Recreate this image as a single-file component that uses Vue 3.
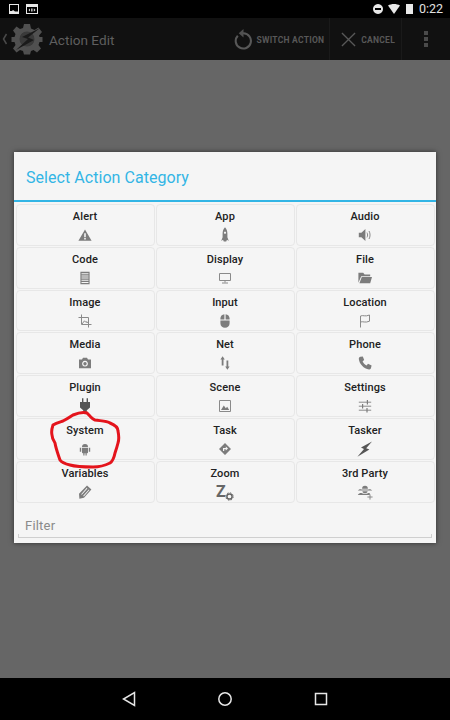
<script setup>
const cats = [
  { name: 'Alert', fill: 'M8 2.600 14.600 13.800H1.400ZM7.200 6.200v4h1.600v-4ZM7.200 11v1.500h1.600V11Z' },
  { name: 'App', fill: 'M8 .2C9.800 2 10.400 4.400 10.400 6.800V10.200L11.800 14 10 12.800 9.200 14.400H6.800L6 12.800 4.200 14 5.600 10.200V6.800C5.600 4.400 6.200 2 8 .2ZM8 4.600a1.100 1.100 0 1 0 .01 0Z' },
  { name: 'Audio', fill: 'M1.800 5.800H4.400L8.400 2V14L4.400 10.200H1.800Z', line: 'M10 5.600C10.800 7 10.800 9 10 10.400M12 4C13.400 6.200 13.400 9.800 12 12' },
  { name: 'Code', fill: 'M3.400 1.800H12.600V14.200H3.400ZM4.500 3.200V4.200H11.500V3.200ZM4.500 5.400V6.400H11.500V5.400ZM4.500 7.600V8.600H11.500V7.600ZM4.500 9.800V10.800H11.500V9.800ZM4.500 12V13H11.500V12Z' },
  { name: 'Display', line: 'M2.500 3.500H13.500V10.500H2.500ZM8 10.500V12.500M5 13H11' },
  { name: 'File', fill: 'M1.400 2.800H6.200L7.600 4.400H13.200V6.200H4.200L1.400 12.800ZM4.800 7H15L13.200 13.200H2.400Z' },
  { name: 'Image', line: 'M4.500 1.500V11.500H14.500M1.500 4.500H11.500V14.500M5 11L7.500 7.800 9 9.500 10 8.600 11 10' },
  { name: 'Input', fill: 'M7.400 1.200V6.400H3.400V5.600C3.400 3.200 5 1.400 7.400 1.200ZM8.600 1.200C11 1.400 12.600 3.200 12.600 5.600V6.400H8.600ZM3.400 7.400H12.600V10.200C12.600 13 10.600 14.800 8 14.800S3.400 13 3.400 10.200Z' },
  { name: 'Location', line: 'M3.500 14.500V3C6 1.800 8 4 12.500 2V8.200C8 10.200 6 8 3.500 9' },
  { name: 'Media', fill: 'M2 4.400H5L6 2.800H10L11 4.400H14V13.200H2ZM8 5.800A2.900 2.900 0 1 0 8.010 5.800ZM8 7A1.700 1.700 0 1 1 7.990 7Z' },
  { name: 'Net', fill: 'M5.600 1.200 7.800 4.600H6.500V10.400H4.700V4.600H3.400ZM10.400 14.800 8.200 11.400H9.500V5.600H11.300V11.400H12.600Z' },
  { name: 'Phone', fill: 'M3.400 1.800 5.800 1.400 7.200 5 5.600 6.200C6.200 8 7.800 9.600 9.600 10.400L11 8.800 14.600 10.400 14 13C13.800 14 13 14.600 12 14.400 6.800 13.800 2.400 9 1.800 4 1.800 2.800 2.400 2 3.400 1.800Z' },
  { name: 'Plugin', dark: true, fill: 'M5 .2H6.400V4H9.600V.2H11V4H13V9.400L9.800 12.200V15.800H6.200V12.200L3 9.400V4H5Z' },
  { name: 'Scene', line: 'M2.500 2.500H13.500V13.500H2.500Z', fill: 'M4 12 6.800 7.600 8.800 10.200 10.200 8.800 12.200 12Z' },
  { name: 'Settings', line: 'M1.800 4.200H14.200M1.800 8.200H14.200M1.800 12.200H14.200', fill: 'M9.800 2H11V6.400H9.800ZM5 6H6.200V10.400H5ZM9.400 10H10.600V14.400H9.400Z' },
  { name: 'System', fill: 'M5 6A3 3 0 0 1 11 6ZM5 6.800H11V11.400C11 11.900 10.700 12.200 10.200 12.200H9.700V14.400H8.500V12.200H7.500V14.400H6.300V12.200H5.800C5.300 12.200 5 11.900 5 11.400ZM2.800 6.800H4.200V10.800H2.800ZM11.800 6.800H13.200V10.800H11.800Z' },
  { name: 'Task', fill: 'M8 2 14 8 8 14 2 8ZM6 7V10H7.200V8.200H8.800V9.600L11 7.600 8.800 5.600V7Z' },
  { name: 'Tasker', dark: true, fill: 'M15 .4 4 6.400 7 8 .4 15.800 12.400 8.600 9.200 7.200Z' },
  { name: 'Variables', fill: 'M10 1.400 14.400 5.400 7 13.800 2.400 14.800 2 9.800ZM9.800 3.800 4.200 10.200 4.800 10.800 10.400 4.400ZM11.800 5.400 6.200 11.800 6.800 12.400 12.400 6Z' },
  { name: 'Zoom', zoom: true },
  { name: '3rd Party', fill: 'M8 1.800C10 1.800 10.900 3 10.900 4.800H5.100C5.100 3 6 1.800 8 1.800ZM.8 6.600C2 5.200 3.400 5 4.400 5.400H11.600C12.600 5 14 5.200 15.200 6.600ZM5.400 7.200H10.600C10.400 8.600 9.300 9.200 8 9.200S5.600 8.600 5.400 7.200ZM.8 11C2 9.200 3.600 8.800 5 9.200 6.400 10.200 9.600 10.200 11 9.200 11.600 9 12.200 9 12.800 9.200V11Z', line: 'M13 10.400V15.600M10.400 13H15.600' },
];
</script>

<template>
  <div class="screen">
    <div class="status">
      <div class="status-left">
        <svg width="10" height="10" viewBox="0 0 10 10"><path class="wf" d="M0 0H10V10H0ZM1 1V7H3L4 6 6 7.500H9V1Z" fill-rule="evenodd" /></svg>
        <svg width="12" height="10" viewBox="0 0 12 10"><path class="wf" d="M0 0H12V10H0ZM1 3V9H11V3ZM4 4.500 2.500 6 4 7.500ZM8 4.500V7.500L9.500 6ZM5 4.500H5.800V7.500H5ZM6.500 4.500H7.200V7.500H6.500Z" fill-rule="evenodd" /></svg>
      </div>
      <div class="status-right">
        <svg width="10" height="10" viewBox="0 0 10 10"><path class="wf" d="M5 0A5 5 0 1 0 5.010 0ZM2 4H8V6H2Z" fill-rule="evenodd" /></svg>
        <svg width="12" height="10" viewBox="0 0 12 10"><path class="wf" d="M0 1.500C3.500-.5 8.500-.5 12 1.500L6 10Z" /></svg>
        <span class="battery"></span>
        <span class="clock">0:22</span>
      </div>
    </div>

    <header class="bar">
      <svg class="chev" width="6" height="12" viewBox="0 0 6 12"><path d="M4.500 1 1.500 6 4.500 11" /></svg>
      <svg class="logo" width="32" height="32" viewBox="0 0 32 32">
        <path class="gear" fill-rule="evenodd" d="M13 1H19L20 5.500 23.500 7 27.500 4.500 31 9 28 12.500 28.500 14H31.500V19H28.500L27.500 22 30 25.500 26 29.500 22.500 27 20 28 19 31.500H13L12 28 9 27 5.500 29.500 2 25.500 4.500 22 3.500 19H.5V14H3.500L4.500 11 2 7.500 5.500 3.500 9 6 12 5ZM16 9A7 7 0 1 0 16.010 9Z" />
        <circle class="hub" cx="16" cy="16" r="7.500" />
        <path class="bolt" d="M29 5 11 14 17 16 5 27 23 17 17 14.500Z" />
      </svg>
      <span class="bar-title">Action Edit</span>
      <div class="actions">
        <div class="action switch">
          <svg width="19" height="22" viewBox="0 0 20 22"><path class="line" d="M4 7.500A8 8 0 1 0 10 5H7" /><path class="gear" d="M10 .5V9.500L5 5Z" /></svg>
          <span>SWITCH ACTION</span>
        </div>
        <div class="action cancel">
          <svg width="15" height="15" viewBox="0 0 16 16"><path class="line thin" d="M1 1 15 15M15 1 1 15" /></svg>
          <span>CANCEL</span>
        </div>
        <div class="more"><i></i><i></i><i></i></div>
      </div>
    </header>

    <main class="overlay">
      <section class="dialog">
        <h1 class="title">Select Action Category</h1>
        <div class="grid">
          <div v-for="c in cats" :key="c.name" class="cell">
            <span class="label">{{ c.name }}</span>
            <svg v-if="!c.zoom" class="icon" :class="{ dark: c.dark }" width="16" height="16" viewBox="0 0 16 16">
              <path v-if="c.line" class="iline" :d="c.line" />
              <path v-if="c.fill" class="ifill" fill-rule="evenodd" :d="c.fill" />
            </svg>
            <div v-else class="zoom-icon">
              <span class="zed">Z</span>
              <svg class="cog-svg" width="9" height="9" viewBox="0 0 9 9">
                <circle cx="4.500" cy="4.500" r="2.600" class="cog" />
                <circle cx="4.500" cy="4.500" r="3.700" class="cogteeth" />
              </svg>
            </div>
          </div>
        </div>
        <div class="filter">
          <span>Filter</span>
        </div>
      </section>
      <svg class="scribble" width="80" height="64" viewBox="50 411 80 64">
        <path d="M73 415C78 413 84 412 87 413 90 416 92 419 95 420 102 421 107 421 110 423 115 425 118 428 118 431 119 436 119 440 118 443 117 447 116 450 115 453 114 458 113 461 110 463 104 466 99 467 93 467 85 467 77 467 70 465 66 464 62 463 60 460 58 454 56 449 55 443 53 440 52 438 52 435 51 431 52 428 53 425 56 423 60 422 63 421 67 419 70 417 73 415Z" />
      </svg>
    </main>

    <nav class="nav">
      <svg width="14" height="16" viewBox="0 0 14 16"><path d="M12.500 1.500V14.500L1.500 8Z" /></svg>
      <svg width="16" height="16" viewBox="0 0 16 16"><circle cx="8" cy="8" r="6.200" /></svg>
      <svg width="14" height="14" viewBox="0 0 14 14"><path d="M1.500 1.500H12.500V12.500H1.500Z" /></svg>
    </nav>
  </div>
</template>

<style>
html, body { margin: 0; background: #000; }
</style>

<style scoped>
.screen { width: 450px; height: 720px; display: flex; flex-direction: column; overflow: hidden; font-family: Roboto, sans-serif; background: #000; }
.status { height: 18px; flex: none; display: flex; align-items: center; justify-content: space-between; padding: 0 7px 0 9px; background: #000; }
.status-left { display: flex; align-items: center; gap: 7px; }
.status-right { display: flex; align-items: center; }
.wf { fill: #e8e8e8; }
.status-right svg:nth-child(2) { margin-left: 5px; }
.battery { width: 7px; height: 10px; margin-left: 6px; background: #e8e8e8; }
.clock { margin-left: 6px; color: #e0e0e0; font-size: 12.500px; line-height: 18px; }
.bar { height: 42px; flex: none; display: flex; align-items: center; background: #111; padding-left: 2px; }
.chev { fill: none; stroke: #4a4a4a; stroke-width: 1.500; flex: none; }
.logo { margin-left: 3px; flex: none; }
.gear { fill: #505050; }
.hub { fill: #3a3a3a; }
.bolt { fill: #1a1a1a; }
.bar-title { margin-left: 6px; padding-top: 2px; font-size: 13.600px; color: #5f5f5f; white-space: nowrap; }
.actions { margin-left: auto; display: flex; align-items: center; height: 100%; }
.action { display: flex; align-items: center; height: 100%; color: #585858; font-size: 8.500px; font-weight: 700; letter-spacing: .25px; white-space: nowrap; }
.action span { padding-top: 1px; }
.switch { gap: 3px; padding-right: 5px; border-right: 1px solid #1a1a1a; }
.cancel { gap: 5px; padding: 0 6px 0 11px; border-right: 1px solid #1a1a1a; }
.line { fill: none; stroke: #585858; stroke-width: 2.200; }
.line.thin { stroke-width: 1.400; }
.more { width: 48px; display: flex; flex-direction: column; align-items: center; gap: 2px; }
.more i { width: 4px; height: 4px; background: #4a4a4a; display: block; }
.overlay { flex: 1; position: relative; background: #666; display: flex; align-items: flex-start; justify-content: center; padding-top: 92px; }
.dialog { width: 422px; height: 391px; background: #f5f5f5; box-shadow: 0 0 5px rgba(0,0,0,.55); display: flex; flex-direction: column; }
.title { margin: 0; height: 48px; padding: 0 12px; border-bottom: 2px solid #33b5e5; font-size: 16px; font-weight: 400; line-height: 51px; color: #33b5e5; letter-spacing: .05px; }
.grid { display: grid; grid-template-columns: repeat(3, 139px); grid-auto-rows: 41.830px; gap: 1px; padding: 2px 2px 0; justify-content: center; }
.cell { border: 1px solid #e7e7e7; border-radius: 4px; box-sizing: border-box; display: flex; flex-direction: column; align-items: center; padding-top: 5px; }
.label { font-size: 11px; font-weight: 500; line-height: 14px; color: #222; white-space: nowrap; letter-spacing: .1px; }
.icon { margin-top: 3px; flex: none; }
.ifill { fill: #7c7c7c; }
.iline { fill: none; stroke: #8a8a8a; stroke-width: 1; }
.dark .ifill { fill: #555; }
.zoom-icon { position: relative; width: 18px; height: 18px; margin-top: 2px; }
.zed { display: block; font-size: 16px; font-weight: 700; line-height: 18px; color: #666; }
.cog-svg { position: absolute; right: 0; bottom: 0; }
.cog { fill: #f5f5f5; stroke: #666; stroke-width: 1.500; }
.cogteeth { fill: none; stroke: #666; stroke-width: 1; stroke-dasharray: 1.500 1.400; }
.filter { position: relative; margin: 12px 4px 0; height: 22px; border-bottom: 1px solid #cfcfcf; padding-left: 7px; font-size: 13px; line-height: 22px; color: #8a8a8a; letter-spacing: .2px; }
.filter::before, .filter::after { content: ""; position: absolute; bottom: 0; width: 1px; height: 3px; background: #cfcfcf; }
.filter::before { left: 0; }
.filter::after { right: 0; }
.scribble { position: absolute; left: 50px; top: 351px; fill: none; stroke: #e4141c; stroke-width: 3; stroke-linejoin: round; }
.nav { height: 42px; flex: none; background: #000; display: flex; align-items: center; position: relative; padding-left: 122px; }
.nav svg { fill: none; stroke: #e6e6e6; stroke-width: 1.500; flex: none; }
.nav svg:nth-child(2) { margin-left: 81px; }
.nav svg:nth-child(3) { margin-left: 81px; }
</style>
